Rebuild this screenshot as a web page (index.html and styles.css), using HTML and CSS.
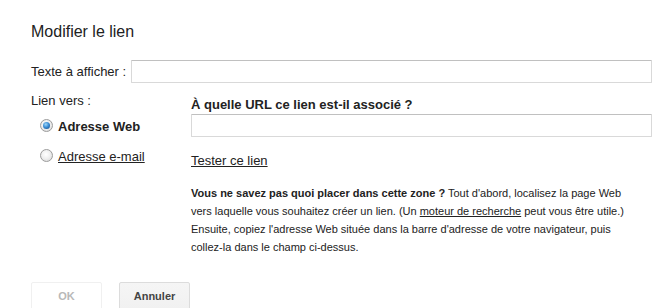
FILE: index.html
```html
<!DOCTYPE html>
<html lang="fr">
  <head>
    <meta charset="UTF-8" />
    <title>Modifier le lien</title>
    <link rel="stylesheet" href="styles.css">
  </head>
  <body>
    <div class="dialog">
      <h1 class="title">Modifier le lien</h1>

      <div class="text-row">
        <label for="linkText">Texte à afficher :</label>
        <input type="text" id="linkText" class="field" />
      </div>

      <div class="link-row">
        <div class="link-types">
          <div class="link-label">Lien vers :</div>
          <div class="radio-row">
            <span class="radio checked"></span>
            <span class="radio-text selected">Adresse Web</span>
          </div>
          <div class="radio-row">
            <span class="radio"></span>
            <a href="#" class="radio-text">Adresse e-mail</a>
          </div>
        </div>

        <div class="link-detail">
          <h2 class="question">À quelle URL ce lien est-il associé ?</h2>
          <input type="text" id="linkUrl" class="field" />
          <a href="#" class="test-link">Tester ce lien</a>
          <p class="help"><b>Vous ne savez pas quoi placer dans cette zone ?</b> Tout d'abord, localisez la page Web vers laquelle vous souhaitez créer un lien. (Un <a href="#">moteur de recherche</a> peut vous être utile.) Ensuite, copiez l'adresse Web située dans la barre d'adresse de votre navigateur, puis collez-la dans le champ ci-dessus.</p>
        </div>
      </div>

      <div class="buttons">
        <button class="btn" disabled>OK</button>
        <button class="btn">Annuler</button>
      </div>
    </div>
  </body>
</html>
```

FILE: styles.css
```css
body {
  margin: 0;
  background: #ffffff;
  font-family: "Liberation Sans", Arial, sans-serif;
  font-size: 13px;
  color: #222222;
}

.dialog {
  padding: 22px 17px 0 31px;
}

.title {
  margin: 0 0 18px;
  font-size: 16px;
  line-height: 20px;
  font-weight: normal;
  color: #222222;
}

.text-row {
  display: flex;
  align-items: center;
}

.text-row label {
  width: 100px;
  line-height: 23px;
}

.field {
  flex: 1;
  box-sizing: border-box;
  height: 23px;
  margin: 0;
  padding: 1px 6px;
  border: 1px solid #d9d9d9;
  border-top-color: #c0c0c0;
  border-radius: 1px;
  font: inherit;
}

.field:focus {
  outline: none;
  border-color: #4d90fe;
}

.link-row {
  display: flex;
  margin-top: 10px;
}

.link-types {
  width: 160px;
  flex-shrink: 0;
}

.link-label {
  line-height: 16px;
  margin-bottom: 2px;
}

.radio-row {
  display: flex;
  align-items: center;
  height: 30px;
  padding-left: 9px;
}

.radio {
  position: relative;
  box-sizing: border-box;
  width: 13px;
  height: 13px;
  margin: -1px 5px 0 0;
  border: 1px solid #9c9c9c;
  border-radius: 50%;
  background: radial-gradient(circle at 45% 40%, #ffffff 0%, #f0f0f0 45%, #d2d2d2 100%);
}

.radio.checked::after {
  content: "";
  position: absolute;
  left: 2px;
  top: 2px;
  width: 7px;
  height: 7px;
  border-radius: 50%;
  background: radial-gradient(circle at 40% 35%, #9fd6f7 0%, #3c8fd6 45%, #0e3f7a 100%);
}

.radio-text {
  color: #222222;
}

.radio-text.selected {
  font-weight: bold;
}

a {
  color: #222222;
}

.link-detail {
  flex: 1;
  display: flex;
  flex-direction: column;
  align-items: flex-start;
  padding-top: 4px;
}

.link-detail .field {
  width: 100%;
  flex: none;
}

.question {
  margin: 0 0 1px;
  font-size: 13px;
  line-height: 16px;
  font-weight: bold;
}

.test-link {
  margin-top: 16px;
  line-height: 16px;
}

.help {
  margin: 15px 0 0;
  font-size: 11px;
  line-height: 18px;
  padding-right: 20px;
}

.buttons {
  display: flex;
  gap: 17px;
  margin-top: 26px;
}

.btn {
  box-sizing: border-box;
  min-width: 71px;
  height: 28px;
  padding: 0 8px;
  border: 1px solid #dcdcdc;
  border-radius: 2px;
  background: linear-gradient(#f5f5f5, #f1f1f1);
  font-family: "Liberation Sans", Arial, sans-serif;
  font-size: 11px;
  font-weight: bold;
  color: #444444;
  cursor: pointer;
}

.btn:disabled {
  background: #ffffff;
  border-color: #f0f0f0;
  color: #b8b8b8;
  cursor: default;
}
```
